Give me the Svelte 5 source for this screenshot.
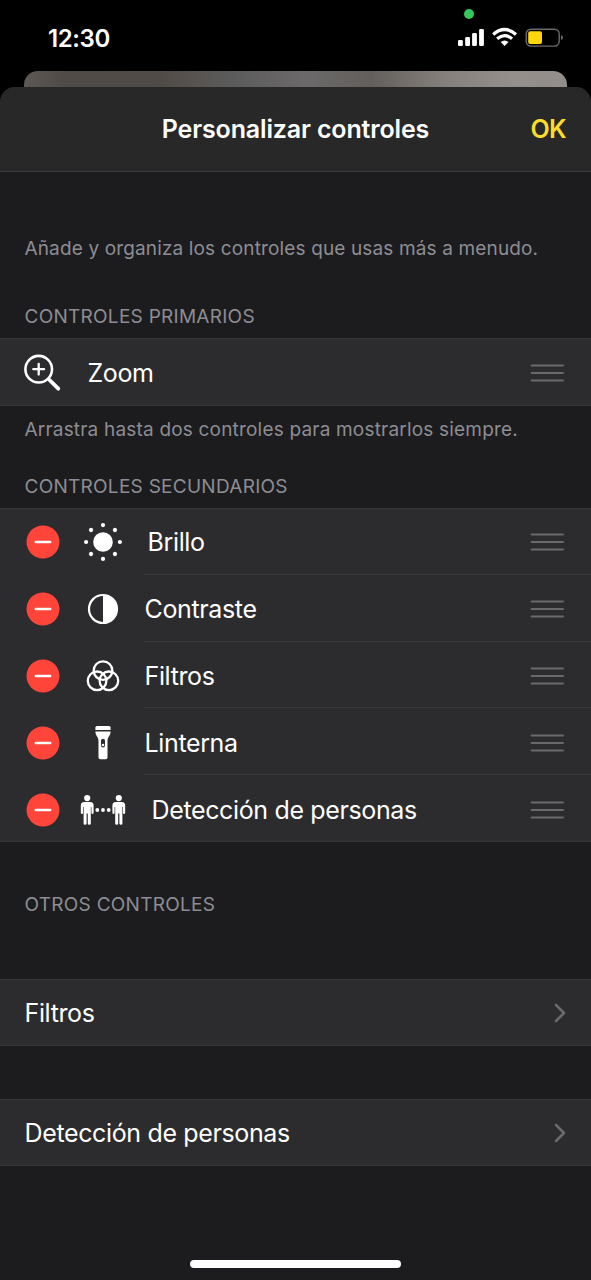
<script lang="ts">
    type Control = { icon: string; name: string; indent: number };

    const secondary: Control[] = [
        { icon: 'brightness', name: 'Brillo', indent: 3 },
        { icon: 'contrast', name: 'Contraste', indent: 0 },
        { icon: 'filters', name: 'Filtros', indent: 0 },
        { icon: 'torch', name: 'Linterna', indent: 0 },
        { icon: 'people', name: 'Detección de personas', indent: 7 },
    ];

    const others = ['Filtros', 'Detección de personas'];
    const rays = [0, 45, 90, 135, 180, 225, 270, 315];
</script>

{#snippet handle()}
    <svg class="handle" width="34" height="20" viewBox="0 0 34 20">
        <path d="M1.6 2.6H33M1.6 10H33M1.6 17.4H33" stroke="#6a6a6d" stroke-width="2" stroke-linecap="round" />
    </svg>
{/snippet}

{#snippet person(x: number)}
    <g transform="translate({x} 0)">
        <circle cx="0" cy="-11.9" r="3.1" />
        <path d="M-3-8H3Q6.4-8 6.4-4.4V2.8Q6.4 4 5.3 4T4.2 2.8V-3H3.6V13.4Q3.6 14.8 2.1 14.8T.6 13.4V3.4H-.6V13.4Q-.6 14.8-2.1 14.8T-3.6 13.4V-3H-4.2V2.8Q-4.2 4-5.3 4T-6.4 2.8V-4.4Q-6.4-8-3-8Z" />
    </g>
{/snippet}

<div class="screen">
    <div class="status">
        <span class="time">12:30</span>
        <span class="camera-dot"></span>
        <svg class="indicators" width="108" height="24" viewBox="0 0 108 24">
            <g fill="#fff">
                <rect x="1" y="14" width="4.8" height="6" rx="1.3" />
                <rect x="8.2" y="11" width="4.8" height="9" rx="1.3" />
                <rect x="15.1" y="7" width="4.8" height="13" rx="1.3" />
                <rect x="22.1" y="3" width="4.8" height="17" rx="1.3" />
            </g>
            <g fill="none" stroke="#fff" stroke-width="3.3">
                <path d="M36.2 8.5Q47.6-1.4 59 8.5" />
                <path d="M40.2 12.7Q47.6 6.5 55 12.7" />
            </g>
            <path d="M43.7 16.1Q47.6 13.1 51.5 16.1L47.6 20Z" fill="#fff" />
            <rect x="69.2" y="3.2" width="33" height="16.9" rx="4.8" fill="none" stroke="#6b6b6b" stroke-width="1.4" />
            <rect x="71.2" y="5.2" width="13.8" height="12.9" rx="2" fill="#ffd60a" />
            <path d="M104 9.2Q106 9.8 106 11.6T104 14.1Z" fill="#6b6b6b" />
        </svg>
    </div>

    <div class="behind"></div>

    <div class="sheet">
        <header>
            <h1>Personalizar controles</h1>
            <button>OK</button>
        </header>

        <p class="note intro">Añade y organiza los controles que usas más a menudo.</p>

        <h2 class="primary-title">CONTROLES PRIMARIOS</h2>
        <div class="group">
            <div class="row primary">
                <svg class="zoom-icon" width="40" height="40" viewBox="0 0 40 40" fill="none" stroke="#fff" stroke-linecap="round">
                    <circle cx="16.7" cy="16.2" r="13.3" stroke-width="2.6" />
                    <path d="M16.7 10.8V21.6M11.3 16.2H22.1" stroke-width="2.3" />
                    <path d="M27 26.5L36.3 35.7" stroke-width="3.8" />
                </svg>
                <span class="name">Zoom</span>
                {@render handle()}
            </div>
        </div>
        <p class="note hint">Arrastra hasta dos controles para mostrarlos siempre.</p>

        <h2 class="secondary-title">CONTROLES SECUNDARIOS</h2>
        <div class="group">
            {#each secondary as item}
                <div class="row secondary">
                    <svg class="remove" width="34" height="34" viewBox="0 0 34 34">
                        <circle cx="17" cy="17" r="16.5" fill="#ff453a" />
                        <path d="M9.8 17H24.2" stroke="#fff" stroke-width="2.5" stroke-linecap="round" />
                    </svg>
                    <svg class="icon" width="50" height="42" viewBox="-25 -21 50 42" fill="#fff">
                        {#if item.icon === 'brightness'}
                            <circle r="9.8" />
                            {#each rays as angle}
                                <circle cx="16.9" r="2.1" transform="rotate({angle})" />
                            {/each}
                        {:else if item.icon === 'contrast'}
                            <circle r="14" fill="none" stroke="#fff" stroke-width="2.2" />
                            <path d="M0-14A14 14 0 0 1 0 14Z" />
                        {:else if item.icon === 'filters'}
                            <g fill="none" stroke="#fff" stroke-width="2.3">
                                <circle cx="0" cy="-5.4" r="9.3" />
                                <circle cx="-5.9" cy="4.8" r="9.3" />
                                <circle cx="5.9" cy="4.8" r="9.3" />
                            </g>
                        {:else if item.icon === 'torch'}
                            <path d="M-7.6-13V-15.4Q-7.6-17-6-17H6Q7.6-17 7.6-15.4V-13Z" />
                            <path fill-rule="evenodd" d="M-7.6-11.4H7.6C7.6-6.8 4.5-6.3 4.5-2V14.5Q4.5 16.2 2.8 16.2H-2.8Q-4.5 16.2-4.5 14.5V-2C-4.5-6.3-7.6-6.8-7.6-11.4ZM0-4.2Q-2-4.2-2-2.2V2.4Q-2 4.4 0 4.4T2 2.4V-2.2Q2-4.2 0-4.2Z" />
                            <circle cy="2" r="1.3" />
                        {:else}
                            {@render person(-15.8)}
                            {@render person(15.8)}
                            <circle cx="-5.7" r="1.9" />
                            <circle r="1.9" />
                            <circle cx="5.7" r="1.9" />
                        {/if}
                    </svg>
                    <div class="cell">
                        <span class="name" style="padding-left: {item.indent}px">{item.name}</span>
                        {@render handle()}
                    </div>
                </div>
            {/each}
        </div>

        <h2 class="others-title">OTROS CONTROLES</h2>
        {#each others as name}
            <div class="group link">
                <div class="row other">
                    <span class="name">{name}</span>
                    <svg width="14" height="20" viewBox="0 0 14 20">
                        <path d="M3 2L11 10L3 18" fill="none" stroke="#6a6a6d" stroke-width="2.6" stroke-linecap="round" stroke-linejoin="round" />
                    </svg>
                </div>
            </div>
        {/each}

        <div class="home-bar"></div>
    </div>
</div>

<style>
    :global(body) {
        background: #000;
    }

    .screen {
        display: flex;
        flex-direction: column;
        width: 591px;
        height: 1280px;
        overflow: hidden;
        background: #000;
        color: #fff;
        font-family: Inter, "Liberation Sans", sans-serif;
    }

    .status {
        position: relative;
        display: flex;
        justify-content: space-between;
        align-items: center;
        box-sizing: border-box;
        height: 71px;
        padding: 5px 26px 0 48px;
    }

    .time {
        font-size: 24px;
        font-weight: 600;
        letter-spacing: -0.4px;
    }

    .camera-dot {
        position: absolute;
        top: 9px;
        left: 464px;
        width: 10px;
        height: 10px;
        border-radius: 50%;
        background: #34c759;
    }

    .behind {
        height: 32px;
        margin: 0 24px -16px;
        border-radius: 14px 14px 0 0;
        background: linear-gradient(90deg, #5d5856, #504a46 8%, #514b47 25%, #5c5b5b 38%, #6b6969 52%, #625f5c 64%, #87817d 78%, #958f8b 90%, #918d8b);
    }

    .sheet {
        position: relative;
        display: flex;
        flex-direction: column;
        flex: 1;
        border-radius: 15px 15px 0 0;
        overflow: hidden;
        background: #1c1c1e;
    }

    header {
        display: grid;
        grid-template-columns: 1fr auto 1fr;
        align-items: center;
        box-sizing: border-box;
        height: 85px;
        padding: 0 25px;
        border-bottom: 1px solid #3a3a3c;
        background: #282828;
    }

    h1 {
        grid-column: 2;
        margin: 0;
        font-size: 25px;
        font-weight: 600;
        letter-spacing: -0.15px;
    }

    button {
        justify-self: end;
        padding: 0;
        border: 0;
        background: none;
        color: #fcdc2a;
        font: inherit;
        font-size: 25px;
        font-weight: 600;
        letter-spacing: -0.6px;
    }

    h2,
    .note {
        margin: 0 24.5px;
        color: #8d8d93;
        font-size: 19px;
        font-weight: 400;
        line-height: 24px;
        white-space: nowrap;
    }

    h2 {
        letter-spacing: 0.27px;
    }

    .intro {
        margin-top: 65px;
        letter-spacing: 0.14px;
    }

    .primary-title {
        margin-top: 44px;
        margin-bottom: 9px;
    }

    .hint {
        margin-top: 12px;
        letter-spacing: 0.19px;
    }

    .secondary-title {
        margin-top: 33px;
        margin-bottom: 9px;
    }

    .others-title {
        margin-top: 51px;
        margin-bottom: 62px;
    }

    .group {
        background: #2c2c2e;
        box-shadow: inset 0 1px #363638, inset 0 -1px #363638;
    }

    .link + .link {
        margin-top: 53px;
    }

    .row {
        display: flex;
        align-items: center;
        box-sizing: border-box;
    }

    .name {
        flex: 1;
        font-size: 25px;
        letter-spacing: -0.36px;
        white-space: nowrap;
    }

    .primary {
        height: 68px;
        padding: 2px 27px 0 22px;
    }

    .primary .name {
        margin-left: 25.5px;
    }

    .secondary {
        height: 66.8px;
        padding-left: 25.5px;
    }

    .remove,
    .icon {
        margin-top: 2px;
    }

    .icon {
        margin-right: 16px;
        margin-left: 18.5px;
    }

    .cell {
        display: flex;
        align-items: center;
        flex: 1;
        box-sizing: border-box;
        height: 100%;
        padding-right: 27px;
        padding-top: 3px;
        border-bottom: 1px solid #39393b;
    }

    .secondary .name {
        margin-left: 0.5px;
    }

    .secondary:last-child .cell {
        border-color: transparent;
    }

    .other {
        height: 67px;
        padding: 1px 24px 0 24.5px;
    }

    .home-bar {
        position: absolute;
        bottom: 12px;
        left: 190px;
        width: 211px;
        height: 8px;
        border-radius: 4px;
        background: #fff;
    }
</style>
